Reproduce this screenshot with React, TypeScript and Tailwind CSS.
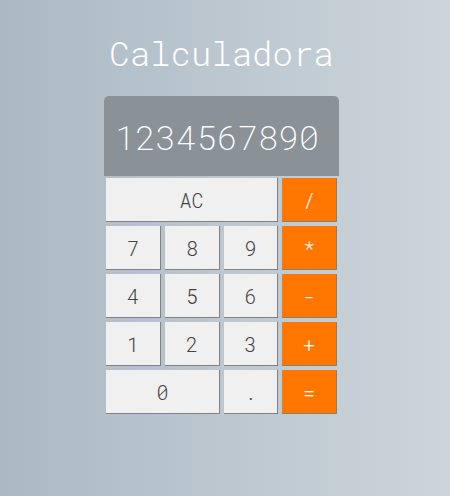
import React from "react";

const mono = { fontFamily: "'Roboto Mono', 'DejaVu Sans Mono', 'Liberation Mono', monospace" };

type Btn = { label: string; op?: boolean; span?: number };

const buttons: Btn[] = [
  { label: "AC", span: 3 },
  { label: "/", op: true },
  { label: "7" },
  { label: "8" },
  { label: "9" },
  { label: "*", op: true },
  { label: "4" },
  { label: "5" },
  { label: "6" },
  { label: "-", op: true },
  { label: "1" },
  { label: "2" },
  { label: "3" },
  { label: "+", op: true },
  { label: "0", span: 2 },
  { label: "." },
  { label: "=", op: true },
];

export default function App() {
  return (
    <div
      className="w-[450px] h-[496px] flex flex-col items-start pl-[104px] bg-gradient-to-r from-[#abb9c4] to-[#cdd5db]"
      style={mono}
    >
      <div className="w-[235px] flex flex-col">
        <h1 className="mt-[33px] text-center text-[34px] leading-[40px] font-light text-white">
          Calculadora
        </h1>
        <div className="mt-[23px] h-[80px] rounded-t-[5px] bg-[#8a9298] flex items-center pl-[11px] text-white text-[34px] font-extralight">
          1234567890
        </div>
        <div className="mt-[2px] pl-[2px] grid grid-cols-[55px_55px_54px_55px] gap-x-[4px] gap-y-[4px] auto-rows-[44px]">
          {buttons.map((b) => (
            <div
              key={b.label}
              className={
                "flex items-center justify-center text-[20px] font-light border-r border-b border-[#808080] " +
                (b.op ? "bg-[#ff7700] text-white " : "bg-[#f0f0f0] text-[#444444] ") +
                (b.span === 3 ? "col-span-3" : b.span === 2 ? "col-span-2" : "")
              }
            >
              {b.label}
            </div>
          ))}
        </div>
      </div>
    </div>
  );
}
